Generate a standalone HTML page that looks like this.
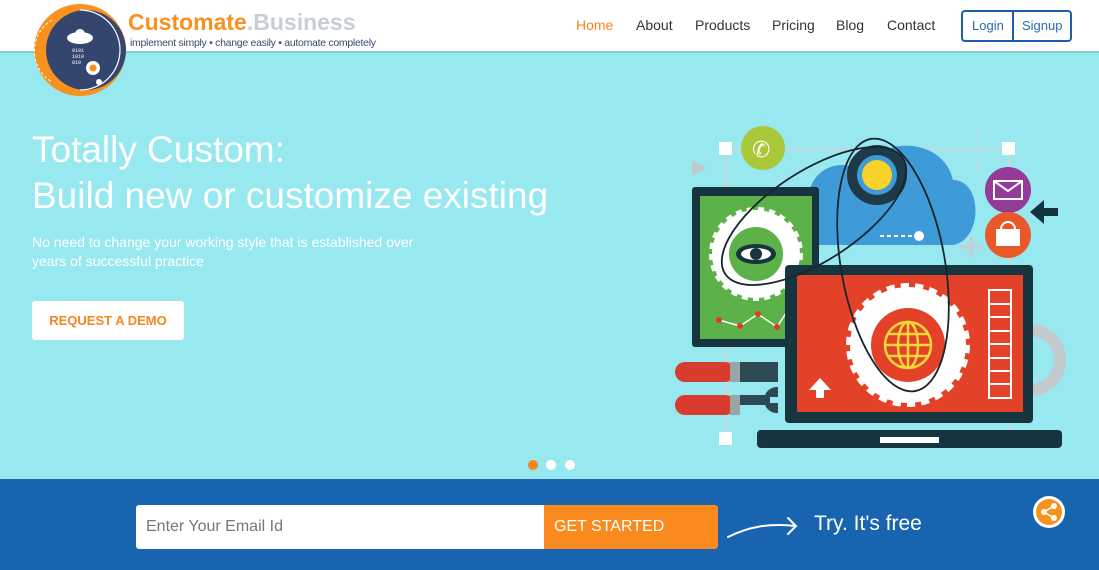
<!DOCTYPE html>
<html><head><meta charset="utf-8"><style>
*{margin:0;padding:0;box-sizing:border-box}
body{width:1099px;height:570px;overflow:hidden;font-family:"Liberation Sans",sans-serif;background:#98e8f0;position:relative}
.hdr{position:absolute;left:0;top:0;width:1099px;height:53px;background:#fff;border-bottom:2px solid #7fcfc9}
.nav{position:absolute;top:17px;font-size:14px;color:#333}
.nav span{position:absolute;white-space:nowrap}
.auth{position:absolute;left:961px;top:10px;width:111px;height:32px;border:2px solid #1a5fa8;border-radius:4px;font-size:13px;color:#2a6ab0}
.auth span{position:absolute;top:6px}
.h1{position:absolute;left:32px;color:#fff;font-size:37px;white-space:nowrap;letter-spacing:0}
.p{position:absolute;left:32px;color:#fff;font-size:14px;line-height:19px;top:233px;width:405px}
.btn{position:absolute;left:32px;top:301px;width:152px;height:39px;background:#fff;border-radius:3px;color:#f5861f;font-size:13px;font-weight:bold;text-align:center;line-height:39px}
.dot{position:absolute;top:460px;width:10px;height:10px;border-radius:50%;background:#fff}
.bar{position:absolute;left:0;top:479px;width:1099px;height:91px;background:#1964b0}
.inp{position:absolute;left:136px;top:505px;width:408px;height:44px;background:#fff;border-radius:3px 0 0 3px;color:#777;font-size:16px;line-height:44px;padding-left:10px}
.gs{position:absolute;left:544px;top:505px;width:174px;height:44px;background:#fa8a1e;border-radius:0 3px 3px 0;color:#fff;font-size:16px;line-height:44px;padding-left:10px}
.try{position:absolute;left:814px;top:512px;color:#fff;font-size:21px}
</style></head><body>
<div class="hdr"></div>
<div class="bar"></div>
<svg style="position:absolute;left:0;top:0" width="1099" height="570">
<circle cx="80" cy="50" r="46" fill="#f7921e"/>
<circle cx="86" cy="50" r="40" fill="#34466e"/>
<path d="M80 10 A40 40 0 0 1 80 90" fill="none" stroke="#fff" stroke-width="1.2"/>
<path d="M52 20 A36 36 0 0 0 52 82" fill="none" stroke="#fff" stroke-width="1" stroke-dasharray="3 2"/>
<ellipse cx="80" cy="38" rx="13" ry="6" fill="#fff"/><circle cx="80" cy="34" r="5" fill="#fff"/>
<text x="72" y="52" fill="#fff" font-size="5" font-family="Liberation Mono">0101</text>
<text x="72" y="58" fill="#fff" font-size="5" font-family="Liberation Mono">1010</text>
<text x="72" y="64" fill="#fff" font-size="5" font-family="Liberation Mono">010</text>
<circle cx="93" cy="68" r="7" fill="#fff"/><circle cx="93" cy="68" r="3.5" fill="#f7921e"/>
<circle cx="99" cy="82" r="3" fill="#fff"/>
<text x="128" y="30" font-size="23" font-weight="bold" fill="#f7921e" font-family="Liberation Sans">Customate<tspan fill="#c8cfd3">.Business</tspan></text>
<text x="130" y="46" font-size="10.5" fill="#3a4a70" font-family="Liberation Sans" textLength="246">implement simply • change easily • automate completely</text>
<g stroke="#c9d6da" stroke-width="2" fill="none"><path d="M726 149H1009V440M726 149V438"/><path d="M978 132V172" stroke-dasharray="4 3"/></g>
<rect x="719" y="142" width="13" height="13" fill="#fff"/><rect x="1002" y="142" width="13" height="13" fill="#fff"/><rect x="719" y="432" width="13" height="13" fill="#fff"/>
<path d="M692 160l14 8-14 8z" fill="#bfc8cc"/>
<path d="M808 205c-2-40 40-50 55-30 10-40 80-40 90 5 30 0 30 60 0 65H820c-30 0-35-40-12-40z" fill="#3f9bd8"/>
<circle cx="877" cy="175" r="30" fill="#1f3a47"/><circle cx="877" cy="175" r="20" fill="#3f9bd8"/><circle cx="877" cy="175" r="15" fill="#f8d22a"/>
<circle cx="763" cy="148" r="22" fill="#a8c83a"/><text x="752" y="157" font-size="22" fill="#fff">✆</text>
<circle cx="1008" cy="190" r="23" fill="#933b96"/><rect x="994" y="181" width="28" height="18" fill="none" stroke="#fff" stroke-width="2"/><path d="M994 181l14 10 14-10" stroke="#fff" stroke-width="2" fill="none"/>
<circle cx="1008" cy="235" r="23" fill="#e8592a"/><rect x="996" y="229" width="24" height="17" fill="#fff"/><path d="M1001 229a7 7 0 0 1 14 0" stroke="#fff" stroke-width="2" fill="none"/>
<path d="M1030 212l14-12v8h14v8h-14v8z" fill="#12343f"/>
<path d="M960 247h22M971 236v22" stroke="#c3d0d4" stroke-width="4"/>
<path d="M880 236h38" stroke="#fff" stroke-width="2" stroke-dasharray="4 3"/><circle cx="919" cy="236" r="5" fill="#fff"/>
<path d="M1030 330a25 25 0 1 1 0 60" stroke="#c3cacd" stroke-width="12" fill="none"/>
<rect x="692" y="187" width="127" height="160" rx="3" fill="#17353f"/><rect x="700" y="196" width="112" height="143" fill="#5cb148"/>
<circle cx="756" cy="254" r="44" fill="#fff" stroke="#fff" stroke-width="6" stroke-dasharray="6 5"/><circle cx="756" cy="254" r="27" fill="#5cb148"/>
<ellipse cx="756" cy="254" rx="20" ry="10" fill="#17353f"/><ellipse cx="756" cy="254" rx="15" ry="6" fill="#fff"/><circle cx="756" cy="254" r="6" fill="#17353f"/>
<path d="M719 320l21 6 18-12 19 13 18-28" stroke="#fff" stroke-width="1.5" fill="none"/>
<g fill="#e53a2a"><circle cx="719" cy="320" r="3"/><circle cx="740" cy="326" r="3"/><circle cx="758" cy="314" r="3"/><circle cx="777" cy="327" r="3"/><circle cx="795" cy="299" r="3"/></g>
<rect x="785" y="265" width="248" height="158" rx="4" fill="#17353f"/><rect x="797" y="275" width="226" height="137" fill="#e34228"/>
<circle cx="908" cy="345" r="58" fill="#fff" stroke="#fff" stroke-width="8" stroke-dasharray="8 6"/><circle cx="908" cy="345" r="37" fill="#e34228"/>
<g stroke="#f3d83c" stroke-width="2.5" fill="none"><circle cx="908" cy="345" r="23"/><ellipse cx="908" cy="345" rx="10" ry="23"/><path d="M885 345h46M888 334h40M888 356h40M908 322v46"/></g>
<g fill="none" stroke="#fff" stroke-width="2"><rect x="989" y="290" width="22" height="108"/><path d="M989 304h22M989 317h22M989 331h22M989 344h22M989 358h22M989 371h22M989 384h22"/></g>
<path d="M820 378l-11 12h7v8h8v-8h7z" fill="#fff"/>
<rect x="757" y="430" width="305" height="18" rx="4" fill="#17353f"/><rect x="880" y="437" width="59" height="6" fill="#fff"/>
<g fill="none" stroke="#17262d" stroke-width="1.8">
<ellipse cx="814" cy="216" rx="106" ry="45" transform="rotate(-33 814 216)"/>
<ellipse cx="893" cy="265" rx="128" ry="52" transform="rotate(80 893 265)"/>
</g>
<rect x="675" y="362" width="60" height="20" rx="10" fill="#d83c2e"/><rect x="730" y="362" width="10" height="20" fill="#9aa5a8"/><path d="M740 362h38v20h-38z" fill="#2d4a54"/>
<rect x="675" y="395" width="60" height="20" rx="10" fill="#d83c2e"/><rect x="730" y="395" width="10" height="20" fill="#9aa5a8"/><path d="M740 395h25a13 13 0 0 1 13-8v10h-8v6h8v10a13 13 0 0 1-13-8h-25z" fill="#2d4a54"/>
<path d="M728 537c20-10 40-14 68-11M788 518l8 8-8 8" stroke="#fff" stroke-width="2" fill="none" stroke-linecap="round"/>
<circle cx="1049" cy="512" r="16" fill="#fff"/><circle cx="1049" cy="512" r="13" fill="#f7921e"/>
<g fill="#fff"><circle cx="1044" cy="512" r="3"/><circle cx="1054" cy="506" r="3"/><circle cx="1054" cy="518" r="3"/></g>
<path d="M1044 512l10-6M1044 512l10 6" stroke="#fff" stroke-width="1.5"/>
</svg>
<div class="nav" style="left:0"><span style="left:576px;color:#f5861f">Home</span><span style="left:636px">About</span><span style="left:695px">Products</span><span style="left:772px">Pricing</span><span style="left:836px">Blog</span><span style="left:887px">Contact</span></div>
<div class="auth"><span style="left:9px">Login</span><span style="left:49px;top:0;width:2px;height:28px;background:#1a5fa8"></span><span style="left:59px">Signup</span></div>
<div class="h1" style="top:129px">Totally Custom:</div>
<div class="h1" style="top:175px">Build new or customize existing</div>
<div class="p">No need to change your working style that is established over years of successful practice</div>
<div class="btn">REQUEST A DEMO</div>
<div class="dot" style="left:528px;background:#f5861f"></div><div class="dot" style="left:546px"></div><div class="dot" style="left:565px"></div>
<div class="inp">Enter Your Email Id</div>
<div class="gs">GET STARTED</div>
<div class="try">Try. It's free</div>
</body></html>
